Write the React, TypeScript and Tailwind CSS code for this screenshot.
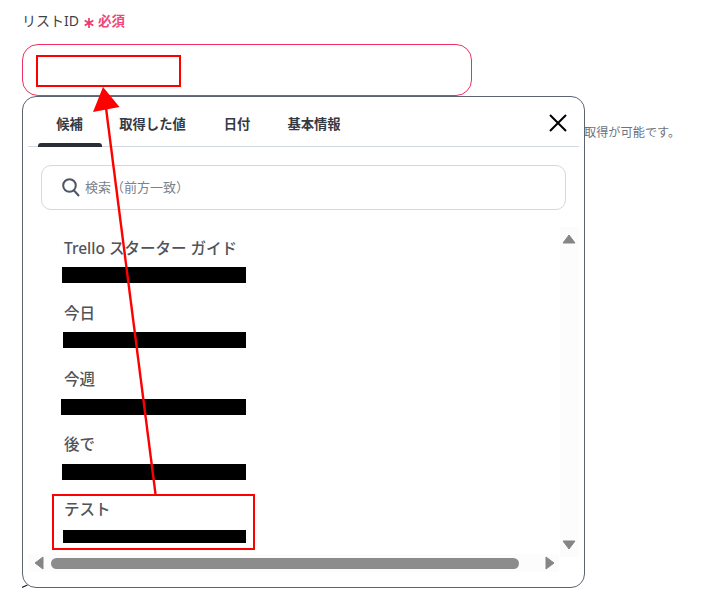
const font = { fontFamily: '"Noto Sans", "Noto Sans CJK JP", sans-serif' };

function Item({ name, boxClass, barClass }: { name: string; boxClass: string; barClass: string }) {
  return (
    <div className={`flex flex-col ${boxClass}`}>
      <div className="h-[24px] pl-[41px] text-[15.5px] font-medium leading-[24px] text-[#505459]">{name}</div>
      <div className={`bg-black ${barClass}`} />
    </div>
  );
}

const tabs = [
  { label: "候補", width: "w-[63px]" },
  { label: "取得した値", width: "w-[103px]" },
  { label: "日付", width: "w-[66px]" },
  { label: "基本情報", width: "w-[88px]" },
];

export default function App() {
  return (
    <div className="relative h-[600px] w-[702px] overflow-hidden bg-white" style={font}>
      <div className="flex flex-col pl-[22px] pt-[9px]">
        <div className="flex h-[24px] items-center">
          <span className="text-[14px] leading-[22px] text-[#3c4148]">リストID</span>
          <svg className="ml-[5px] mt-[3px]" width="10" height="10" viewBox="0 0 10 10" fill="none" stroke="#f0386b" strokeWidth="1.7">
            <path d="M5 0 V10 M0.7 2.5 L9.3 7.5 M9.3 2.5 L0.7 7.5" />
          </svg>
          <span className="ml-[4px] text-[13.5px] font-semibold leading-[22px] text-[#f0487a]">必須</span>
        </div>
        <div className="mt-[11px] h-[52px] w-[450px] rounded-[16px] border border-[#ee2f5f] bg-white" />
        <div className="mt-[28px] h-[18px] pl-[562px] text-[12.2px] leading-[18px] whitespace-nowrap text-[#6b7280]">取得が可能です。</div>
      </div>

      {/* bit of a chevron peeking below the panel */}
      <svg className="absolute left-[22px] top-[582px]" width="8" height="8" viewBox="0 0 8 8" fill="none">
        <path d="M0 5.5 L5.5 3" stroke="#222" strokeWidth="1.2" />
      </svg>

      {/* Panel */}
      <div className="absolute left-[22px] top-[96px] flex h-[492px] w-[563px] flex-col rounded-[14px] border border-[#5b6470] bg-white">
        <div className="relative mx-[5px] flex h-[50px] border-b border-[#d3d8e2] pl-[10px]">
          {tabs.map((t, i) => (
            <div key={t.label} className={`relative flex h-[50px] items-center justify-center pt-[6px] text-[13.3px] font-semibold text-[#333a44] ${t.width}`}>
              {t.label}
              {i === 0 && <div className="absolute bottom-0 left-0 h-[4px] w-[64px] rounded-t-[3px] bg-[#2a2f37]" />}
            </div>
          ))}
          <svg className="absolute right-[12px] top-[17px]" width="18" height="18" viewBox="0 0 18 18" fill="none" stroke="#000" strokeWidth="2">
            <path d="M1 1 L17 17 M17 1 L1 17" />
          </svg>
        </div>

        <div className="mx-[18px] mt-[18px] flex h-[45px] items-center rounded-[10px] border border-[#d3d8e2] pl-[20px]">
          <svg width="18" height="19" viewBox="0 0 18 19" fill="none" stroke="#4b5563" strokeWidth="2">
            <circle cx="7.5" cy="7.5" r="6.3" />
            <path d="M12 12.5 L17 18" />
          </svg>
          <span className="ml-[5px] text-[13px] text-[#7a828e]">検索（前方一致）</span>
        </div>

        <div className="relative mt-[17px] flex min-h-0 flex-1">
          <div className="flex min-w-0 flex-1 flex-col pt-[9px]">
            <Item name="Trello スターター ガイド" boxClass="h-[65px]" barClass="ml-[39px] mt-[7px] h-[16px] w-[184px]" />
            <Item name="今日" boxClass="h-[66px]" barClass="ml-[40px] mt-[7px] h-[16px] w-[183px]" />
            <Item name="今週" boxClass="h-[65px]" barClass="ml-[38px] mt-[8px] h-[16px] w-[185px]" />
            <Item name="後で" boxClass="h-[65px]" barClass="ml-[39px] mt-[8px] h-[16px] w-[184px]" />
            <Item name="テスト" boxClass="h-[47px]" barClass="ml-[40px] mt-[9px] h-[13px] w-[183px]" />
          </div>
          {/* vertical scrollbar */}
          <div className="mr-[5px] flex h-[330px] w-[19px] flex-col items-center justify-between bg-[#fcfcfc] py-[7px] pr-[1px]">
            <svg width="14" height="10" viewBox="0 0 14 10" fill="#858585" stroke="#858585" strokeLinejoin="round"><path d="M7 1 L13 9 H1 Z" /></svg>
            <svg width="14" height="10" viewBox="0 0 14 10" fill="#858585" stroke="#858585" strokeLinejoin="round"><path d="M7 9 L13 1 H1 Z" /></svg>
          </div>
        </div>

        {/* horizontal scrollbar */}
        <div className="mb-[15px] ml-[5px] mr-[25px] flex h-[18px] items-center bg-[#fcfcfc] pl-[6px]">
          <svg width="10" height="14" viewBox="0 0 10 14" fill="#858585" stroke="#858585" strokeLinejoin="round"><path d="M1 7 L9 1 V13 Z" /></svg>
          <div className="ml-[7px] h-[11px] w-[468px] rounded-full bg-[#8c8c8c]" />
          <svg className="ml-[26px]" width="10" height="14" viewBox="0 0 10 14" fill="#858585" stroke="#858585" strokeLinejoin="round"><path d="M9 7 L1 1 V13 Z" /></svg>
        </div>
      </div>

      {/* Annotations */}
      <div className="absolute left-[36px] top-[55px] h-[32px] w-[145px] border-2 border-[#ff0000]" />
      <div className="absolute left-[52px] top-[494px] h-[56px] w-[203px] border-2 border-[#ff0000]" />
      <svg className="pointer-events-none absolute left-0 top-0" width="702" height="600" fill="none">
        <path d="M155.5 494 L106 108" stroke="#ff0000" strokeWidth="2.4" />
        <path d="M103 87 L119.5 107 L93 112 Z" fill="#ff0000" />
      </svg>
    </div>
  );
}
